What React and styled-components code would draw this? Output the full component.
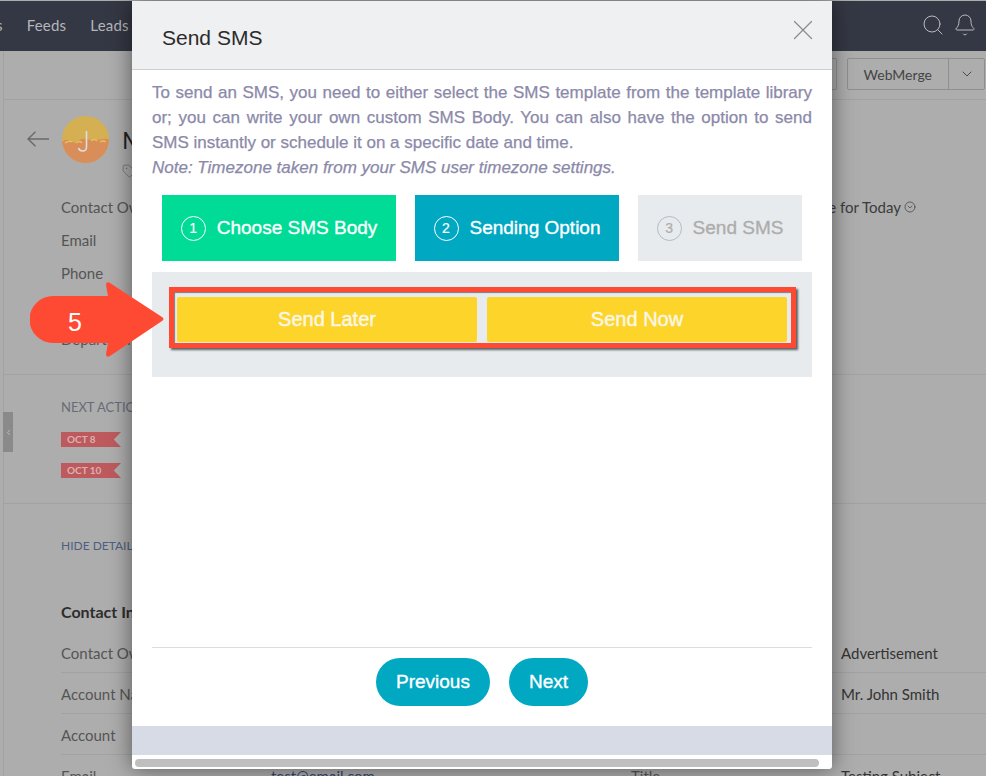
import React from 'react';
import styled, { createGlobalStyle } from 'styled-components';
import { Bell, ChevronDown, ChevronLeft, CircleChevronDown, Search, Tag, X } from 'lucide-react';

const GlobalStyle = createGlobalStyle`
  html, body {
    margin: 0;
    height: 776px;
    overflow: hidden;
    background: #adadad;
    font-family: Lato, "Liberation Sans", sans-serif;
  }
  * { box-sizing: border-box; }
`;

const Page = styled.div`
  position: relative;
  width: 986px;
  height: 776px;
  overflow: hidden;
  padding-top: 1px;
  background: #adadad;
`;

const TopNav = styled.header`
  display: flex;
  align-items: center;
  height: 50px;
  padding: 0 9px 3px 0;
  background: #343844;
  color: #b4b6bb;
  font-size: 15px;
  letter-spacing: 0.2px;
`;

const NavLink = styled.span`
  margin-left: ${(p) => p.$gap}px;
`;

const NavIcons = styled.div`
  display: flex;
  align-items: center;
  gap: 8px;
  margin-left: auto;
  color: #b9bbc0;
`;

const Toolbar = styled.div`
  display: flex;
  align-items: center;
  justify-content: flex-end;
  gap: 10px;
  height: 49px;
  margin-left: 3px;
  padding: 0 1px 2px 0;
  border-left: 1px solid #a2a2a2;
  border-bottom: 1px solid #a2a2a2;
`;

const ToolGroup = styled.div`
  display: flex;
  height: 32px;
  border: 1px solid #8f8f8f;
  border-radius: 2px;
  color: #444;
  font-size: 14px;
`;

const ToolLabel = styled.span`
  display: flex;
  align-items: center;
  padding: 0 16px;
`;

const ToolCaret = styled.span`
  display: flex;
  align-items: center;
  justify-content: center;
  width: 36px;
  border-left: 1px solid #8f8f8f;
`;

const Section = styled.section`
  position: relative;
  margin-left: 3px;
  padding: ${(p) => p.$pad};
  height: ${(p) => p.$height}px;
  border-left: 1px solid #a2a2a2;
  border-bottom: 1px solid #a2a2a2;
`;

const ProfileHead = styled.div`
  display: flex;
  align-items: center;
  height: 48px;
  gap: 13px;
  margin-left: -34px;
`;

const ContactName = styled.span`
  color: #222;
  font-size: 24px;
`;

const TagRow = styled.div`
  display: flex;
  height: 27px;
  padding: 1px 0 0 61px;
  color: #666;
`;

const SummaryRow = styled.div`
  display: flex;
  justify-content: space-between;
  align-items: center;
  height: 33px;
  padding-right: 70px;
  color: #555;
  font-size: 15px;
`;

const SummaryAction = styled.span`
  display: flex;
  align-items: center;
  gap: 3px;
  color: #3c3c3c;
`;

const SectionLabel = styled.div`
  color: #686c76;
  font-size: 13px;
`;

const Ribbon = styled.div`
  width: 60px;
  height: 15px;
  margin-top: ${(p) => p.$top}px;
  padding-left: 6px;
  background: #bd5a5e;
  color: #dcb0b1;
  font-size: 10px;
  font-weight: 700;
  line-height: 15px;
  clip-path: polygon(0 0, 100% 0, 88% 50%, 100% 100%, 0 100%);
`;

const Collapse = styled.div`
  position: absolute;
  left: -1px;
  top: 37px;
  display: flex;
  align-items: center;
  justify-content: center;
  width: 10px;
  height: 40px;
  background: #8a8a8a;
  color: #c9c9c9;
`;

const HideLink = styled.div`
  color: #4d5f80;
  font-size: 12px;
`;

const InfoTitle = styled.h3`
  margin: 49px 0 0;
  color: #2d2d2d;
  font-size: 16px;
  font-weight: 700;
`;

const InfoGrid = styled.div`
  display: grid;
  grid-template-columns: 210px 360px 210px 1fr;
  margin-top: 11px;
`;

const InfoCell = styled.div`
  height: 41px;
  padding-top: 12px;
  border-bottom: 1px solid #a2a2a2;
  color: ${(p) => p.$color || '#555'};
  font-size: 15px;
  line-height: 18px;
`;

const Modal = styled.div`
  position: absolute;
  left: 132px;
  top: 1px;
  display: flex;
  flex-direction: column;
  width: 700px;
  height: 768px;
  border-radius: 0 0 3px 3px;
  background: #fff;
  box-shadow: 0 0 22px rgba(0, 0, 0, 0.5);
  font-family: "Liberation Sans", Arial, sans-serif;
`;

const ModalHead = styled.div`
  display: flex;
  align-items: center;
  justify-content: space-between;
  flex: none;
  height: 69px;
  padding: 0 12px 10px 30px;
  border-bottom: 1px solid #cfcfcf;
  background: #eff0f2;
`;

const ModalTitle = styled.h2`
  margin: 16px 0 0;
  color: #2b2b2b;
  font-size: 21px;
  font-weight: 400;
`;

const CloseIcon = styled(X)`
  color: #8b8b8b;
`;

const ModalBody = styled.div`
  flex: 1;
  display: flex;
  flex-direction: column;
  padding: 10px 20px 0;
`;

const Intro = styled.p`
  margin: 0;
  color: #8b89a9;
  font-size: 17px;
  line-height: 25px;
  text-align: justify;
  -webkit-text-stroke: 0.25px #8b89a9;
`;

const Note = styled.em`
  display: block;
`;

const Steps = styled.div`
  display: flex;
  gap: 19px;
  margin: 15px 0 11px 10px;
`;

const Step = styled.div`
  display: flex;
  align-items: center;
  justify-content: center;
  gap: 11px;
  width: ${(p) => p.$width}px;
  height: 66px;
  background: ${(p) => p.$bg};
  color: ${(p) => p.$color};
  font-size: 19px;
  -webkit-text-stroke: 0.35px ${(p) => p.$color};
`;

const StepNumber = styled.span`
  display: flex;
  align-items: center;
  justify-content: center;
  width: 25px;
  height: 25px;
  border: 1px solid ${(p) => p.$ring};
  border-radius: 50%;
  font-size: 14px;
  -webkit-text-stroke: 0.2px ${(p) => p.$color};
`;

const OptionPanel = styled.div`
  position: relative;
  display: flex;
  gap: 10px;
  padding: 25px 25px 35px;
  background: #e8ebee;
`;

const OptionButton = styled.button`
  width: 300px;
  height: 45px;
  padding: 0;
  border: 0;
  border-radius: 2px;
  background: #fcd42a;
  color: #fbf7e4;
  font: 400 20px "Liberation Sans", Arial, sans-serif;
  -webkit-text-stroke: 0.45px #fbf7e4;
`;

const Highlight = styled.div`
  position: absolute;
  left: 17px;
  top: 15px;
  width: 627px;
  height: 61px;
  border: 5px solid #ff4a33;
  box-shadow: 2px 2px 2px rgba(50, 50, 50, 0.75), inset 1px 1px 1px rgba(50, 50, 50, 0.6);
`;

const ModalActions = styled.div`
  display: flex;
  justify-content: center;
  gap: 19px;
  margin-top: auto;
  padding: 10px 0 20px;
  border-top: 1px solid #dcdcdc;
`;

const PillButton = styled.button`
  height: 48px;
  padding: 0 20px;
  border: 0;
  border-radius: 24px;
  background: #00a8c2;
  color: #fff;
  font: 400 19px "Liberation Sans", Arial, sans-serif;
  -webkit-text-stroke: 0.35px #fff;
`;

const ModalBand = styled.div`
  flex: none;
  height: 29px;
  background: #d7dbe6;
`;

const ScrollTrack = styled.div`
  flex: none;
  height: 14px;
  padding: 4px 13px 2px 3px;
`;

const ScrollThumb = styled.div`
  height: 8px;
  border-radius: 4px;
  background: #bfbfbf;
`;

const Callout = styled.div`
  position: absolute;
  left: 30px;
  top: 282px;
  width: 134px;
  height: 75px;
`;

const CalloutNumber = styled.span`
  position: absolute;
  left: 38px;
  top: 26px;
  color: #fff;
  font: 400 25px/28px "Liberation Sans", Arial, sans-serif;
`;

function BackArrow() {
  return (
    <svg width="22" height="16" viewBox="0 0 22 16" style={{ flex: 'none' }}>
      <path d="M1 8 H22 M8.5 0.8 L1 8 L8.5 15.2" stroke="#6a6a6a" strokeWidth="1.4" fill="none" />
    </svg>
  );
}

function Avatar() {
  return (
    <svg width="47" height="47" viewBox="0 0 47 47" style={{ flex: 'none' }}>
      <defs>
        <clipPath id="avatarClip">
          <circle cx="23.5" cy="23.5" r="23.5" />
        </clipPath>
      </defs>
      <g clipPath="url(#avatarClip)">
        <rect width="47" height="47" fill="#d4b052" />
        <path d="M0 26 q4 -4 8 -1 t8 0 t8 -2 t8 1 t8 -1 t8 1 V47 H0 Z" fill="#d98d58" />
        <path d="M3 27 q4 -3 7 -1 M14 27 q4 -3 6 0 M29 25 q3 -3 6 0 M38 26 q3 -2 6 0" stroke="#e3c25e" strokeWidth="1.5" fill="none" />
      </g>
      <path d="M24.5 15 V31 q0 4 -4 4 q-3 0 -4 -3" stroke="#dedede" strokeWidth="1.6" fill="none" />
    </svg>
  );
}

function CalloutArrow() {
  return (
    <svg width="134" height="75" viewBox="0 0 134 75">
      <path
        d="M23 14 H78 L76 3 Q76 -1 80 1 L132 35 Q135 37 132 39 L80 74 Q76 76 76 72 L78 61 H23 A23.5 23.5 0 0 1 23 14 Z"
        fill="#ff4a33"
      />
    </svg>
  );
}

const summaryRows = ['Contact Owner', 'Email', 'Phone', 'Mobile', 'Department'];

const infoRows = [
  ['Contact Owner', 'John Smith', 'Lead Source', 'Advertisement'],
  ['Account Name', 'Test Account', 'Contact Name', 'Mr. John Smith'],
  ['Account', '', 'Vendor', ''],
  ['Email', 'test@email.com', 'Title', 'Testing Subject'],
];

export default function App() {
  return (
    <Page>
      <GlobalStyle />
      <TopNav>
        <NavLink $gap={-4}>s</NavLink>
        <NavLink $gap={24}>Feeds</NavLink>
        <NavLink $gap={24}>Leads</NavLink>
        <NavIcons>
          <Search size={24} strokeWidth={1} />
          <Bell size={24} strokeWidth={1} />
        </NavIcons>
      </TopNav>
      <Toolbar>
        <ToolGroup>
          <ToolLabel>Convert</ToolLabel>
        </ToolGroup>
        <ToolGroup>
          <ToolLabel>WebMerge</ToolLabel>
          <ToolCaret>
            <ChevronDown size={16} strokeWidth={1.4} />
          </ToolCaret>
        </ToolGroup>
      </Toolbar>
      <Section $height={275} $pad="15px 0 0 57px">
        <ProfileHead>
          <BackArrow />
          <Avatar />
          <ContactName>Mr. John Smith</ContactName>
        </ProfileHead>
        <TagRow>
          <Tag size={14} strokeWidth={1.2} />
        </TagRow>
        {summaryRows.map((label, i) => (
          <SummaryRow key={label}>
            <span>{label}</span>
            {i === 0 && (
              <SummaryAction>
                Schedule for Today <CircleChevronDown size={12} strokeWidth={1.4} />
              </SummaryAction>
            )}
          </SummaryRow>
        ))}
      </Section>
      <Section $height={129} $pad="24px 0 0 57px">
        <SectionLabel>NEXT ACTION</SectionLabel>
        <Ribbon $top={17}>OCT 8</Ribbon>
        <Ribbon $top={16}>OCT 10</Ribbon>
        <Collapse>
          <ChevronLeft size={9} />
        </Collapse>
      </Section>
      <Section $height={280} $pad="34px 0 0 57px">
        <HideLink>HIDE DETAILS</HideLink>
        <InfoTitle>Contact Information</InfoTitle>
        <InfoGrid>
          {infoRows.map((row) =>
            row.map((cell, i) => (
              <InfoCell key={`${row[0]}-${i}`} $color={i === 3 ? '#333' : i === 1 ? '#34466e' : undefined}>
                {cell}
              </InfoCell>
            )),
          )}
        </InfoGrid>
      </Section>

      <Modal>
        <ModalHead>
          <ModalTitle>Send SMS</ModalTitle>
          <CloseIcon size={34} strokeWidth={0.85} />
        </ModalHead>
        <ModalBody>
          <Intro>
            To send an SMS, you need to either select the SMS template from the template library or; you can write your
            own custom SMS Body. You can also have the option to send SMS instantly or schedule it on a specific date
            and time.
            <Note>Note: Timezone taken from your SMS user timezone settings.</Note>
          </Intro>
          <Steps>
            <Step $width={234} $bg="#00db96" $color="#fff">
              <StepNumber $ring="#fff" $color="#fff">1</StepNumber>
              Choose SMS Body
            </Step>
            <Step $width={204} $bg="#00a8c2" $color="#fff">
              <StepNumber $ring="#fff" $color="#fff">2</StepNumber>
              Sending Option
            </Step>
            <Step $width={164} $bg="#e8ebee" $color="#adadad">
              <StepNumber $ring="#b4bbc8" $color="#adadad">3</StepNumber>
              Send SMS
            </Step>
          </Steps>
          <OptionPanel>
            <OptionButton>Send Later</OptionButton>
            <OptionButton>Send Now</OptionButton>
            <Highlight />
          </OptionPanel>
          <ModalActions>
            <PillButton>Previous</PillButton>
            <PillButton>Next</PillButton>
          </ModalActions>
        </ModalBody>
        <ModalBand />
        <ScrollTrack>
          <ScrollThumb />
        </ScrollTrack>
      </Modal>

      <Callout>
        <CalloutArrow />
        <CalloutNumber>5</CalloutNumber>
      </Callout>
    </Page>
  );
}
